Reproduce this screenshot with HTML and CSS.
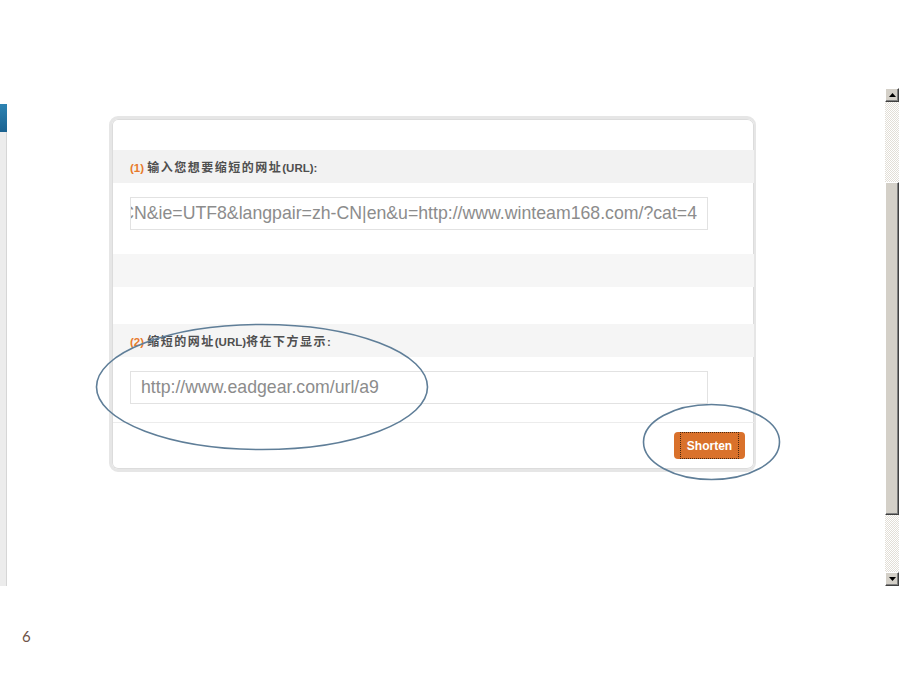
FILE: index.html
```html
<!DOCTYPE html>
<html lang="zh-CN">
<head>
<meta charset="utf-8">
<title>Shorten URL</title>
<link rel="stylesheet" href="styles.css">
</head>
<body>
<div class="slide">
  <div class="viewport">
    <div class="leftbar">
      <div class="leftbar-head"></div>
      <div class="leftbar-body"></div>
    </div>
    <div class="content">
      <div class="card">
        <div class="spacer-top"></div>
        <div class="band"><span class="label"><span class="num">(1)</span> <span class="cjk">输入您想要缩短的网址</span>(URL):</span></div>
        <div class="field field-first"><span class="field-text">http://translate.google.com/translate?hl=zh-CN&amp;ie=UTF8&amp;langpair=zh-CN|en&amp;u=http://www.winteam168.com/?cat=4</span></div>
        <div class="band band-empty"></div>
        <div class="band band-second"><span class="label"><span class="num">(2)</span> <span class="cjk">缩短的网址</span>(URL)<span class="cjk">将在下方显示</span>:</span></div>
        <div class="field field-second"><span class="field-text">http://www.eadgear.com/url/a9</span></div>
        <div class="divider"></div>
        <div class="actions">
          <button class="shorten"><span class="shorten-inner">Shorten</span></button>
        </div>
      </div>
    </div>
    <div class="scrollbar">
      <div class="sb-btn"><svg width="7" height="4" viewBox="0 0 7 4"><path d="M0 4 L3.5 0 L7 4 Z" fill="#000"/></svg></div>
      <div class="sb-track sb-track-top"></div>
      <div class="sb-thumb"></div>
      <div class="sb-track sb-track-bottom"></div>
      <div class="sb-btn"><svg width="7" height="4" viewBox="0 0 7 4"><path d="M0 0 L3.5 4 L7 0 Z" fill="#000"/></svg></div>
    </div>
  </div>
  <div class="page-number">6</div>
  <svg class="annotations" width="900" height="675" viewBox="0 0 900 675">
    <ellipse cx="262" cy="387" rx="165.5" ry="62.5" fill="none" stroke="#5f7e98" stroke-width="1.6"/>
    <ellipse cx="711.5" cy="442" rx="68" ry="37.5" fill="none" stroke="#5f7e98" stroke-width="1.6"/>
  </svg>
</div>
</body>
</html>
```

FILE: styles.css
```css
* { box-sizing: border-box; }
html, body { margin: 0; padding: 0; background: #fff; }
body { font-family: "Liberation Sans", Arial, "Noto Sans CJK SC", sans-serif; }

.slide {
  position: relative;
  width: 900px;
  height: 675px;
  overflow: hidden;
  background: #fff;
}

.viewport {
  display: flex;
  height: 586px;
}

.leftbar {
  width: 7px;
  margin-top: 104px;
  display: flex;
  flex-direction: column;
}
.leftbar-head {
  height: 28px;
  background: linear-gradient(#2d84b3, #1b6290);
}
.leftbar-body {
  flex: 1;
  background: #ececec;
  border-right: 1px solid #d6d6d6;
}

.content {
  flex: 1;
  padding-top: 116px;
  padding-left: 102px;
}

.card {
  width: 647px;
  height: 356px;
  border: 3px solid #e6e6e6;
  border-right-width: 2px;
  border-radius: 9px;
  box-shadow: inset 0 0 0 1px #dcdcdc;
  background: #fff;
  padding: 1px 0 0 1px;
  display: flex;
  flex-direction: column;
}

.spacer-top { height: 30px; }

.band {
  height: 33px;
  background: #f2f2f2;
  padding-left: 17px;
  display: flex;
  align-items: center;
}
.label {
  font-size: 11.5px;
  font-weight: bold;
  color: #4f4f4f;
  white-space: nowrap;
}
.band-empty {
  margin-top: 24px;
  background: #f6f6f6;
}
.band-second {
  margin-top: 37px;
  background: #f5f5f5;
}
.num { color: #e87b2c; }
.cjk {
  font-family: "Noto Sans CJK SC", sans-serif;
  font-size: 12px;
  letter-spacing: 1.5px;
}

.field {
  margin-left: 17px;
  width: 578px;
  height: 33px;
  border: 1px solid #e2e2e2;
  background: #fff;
  display: flex;
  align-items: center;
  overflow: hidden;
  padding: 0 10px 0 10px;
  font-size: 17.7px;
  color: #8c8c8c;
  white-space: nowrap;
}
.field-first {
  margin-top: 14px;
  justify-content: flex-end;
}
.field-second {
  margin-top: 14px;
}
.field-text { flex: none; }

.divider {
  margin-top: 18px;
  height: 1px;
  background: #ececec;
}

.actions {
  display: flex;
  justify-content: flex-end;
  padding: 9px 9px 0 0;
}
.shorten {
  width: 71px;
  height: 27px;
  border: none;
  border-radius: 4px;
  background: #d9712b;
  padding: 0 6px;
  display: flex;
  font-family: "Liberation Sans", Arial, sans-serif;
  font-size: 12px;
  font-weight: bold;
  color: #fff;
}
.shorten-inner {
  flex: 1;
  display: flex;
  align-items: center;
  justify-content: center;
  border: 1px dotted #4a2a12;
}

.scrollbar {
  width: 15px;
  margin-top: 88px;
  display: flex;
  flex-direction: column;
  border-right: 1px solid #fff;
}
.sb-btn {
  height: 14px;
  background: #d4d0c8;
  border-top: 1px solid #fff;
  border-left: 1px solid #fff;
  border-right: 1px solid #404040;
  border-bottom: 1px solid #404040;
  box-shadow: inset -1px -1px 0 #808080;
  display: flex;
  align-items: center;
  justify-content: center;
}
.sb-track {
  background-color: #fff;
  background-image: repeating-conic-gradient(#e2ded6 0 25%, #fff 0 50%);
  background-size: 2px 2px;
}
.sb-track-top { height: 80px; }
.sb-track-bottom { flex: 1; }
.sb-thumb {
  height: 333px;
  background: #d4d0c8;
  border-top: 1px solid #fff;
  border-left: 1px solid #fff;
  border-right: 1px solid #404040;
  border-bottom: 1px solid #404040;
  box-shadow: inset -1px -1px 0 #808080;
}

.page-number {
  margin: 41px 0 0 22px;
  font-family: "Lato", "Open Sans", sans-serif;
  font-size: 15px;
  color: #6e5348;
}

.annotations {
  position: absolute;
  left: 0;
  top: 0;
  pointer-events: none;
}
```
